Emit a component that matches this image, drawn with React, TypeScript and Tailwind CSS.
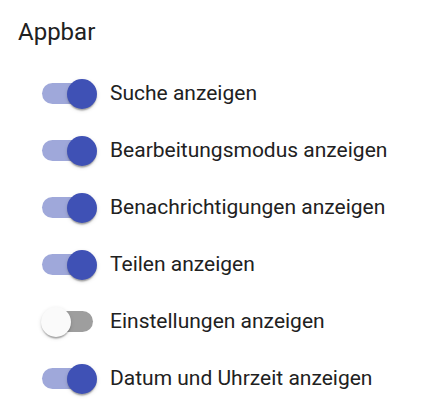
import React, { useState } from 'react';

const items = [
  { label: 'Suche anzeigen', on: true },
  { label: 'Bearbeitungsmodus anzeigen', on: true },
  { label: 'Benachrichtigungen anzeigen', on: true },
  { label: 'Teilen anzeigen', on: true },
  { label: 'Einstellungen anzeigen', on: false },
  { label: 'Datum und Uhrzeit anzeigen', on: true },
];

const Switch = ({ checked, onChange }: { checked: boolean; onChange: () => void }) => (
  <button
    onClick={onChange}
    className="relative w-[87px] h-[57px] p-[18px] flex-shrink-0 flex items-center"
  >
    <span
      className={`block w-[51px] h-[21px] rounded-[10.5px] ${checked ? 'bg-[#9fa8da]' : 'bg-[#9e9e9e]'}`}
    />
    <span
      className={`absolute top-[13.5px] w-[30px] h-[30px] rounded-full shadow-[0_3px_1.5px_-1.5px_rgba(0,0,0,0.2),0_1.5px_1.5px_0_rgba(0,0,0,0.14),0_1.5px_4.5px_0_rgba(0,0,0,0.12)] ${
        checked ? 'left-[43px] bg-[#3f51b5]' : 'left-[17px] bg-[#fafafa]'
      }`}
    />
  </button>
);

export default function App() {
  const [state, setState] = useState(items.map((i) => i.on));

  return (
    <div className="w-[431px] h-[400px] bg-white overflow-hidden font-['Roboto',sans-serif] text-[#212121]">
      <h2 className="pl-[18px] pt-[17px] text-[24px] leading-[30px] font-normal">Appbar</h2>
      <div className="pl-[24px] pt-[18px] flex flex-col">
        {items.map((item, i) => (
          <label key={item.label} className="flex items-center h-[57px] cursor-pointer">
            <Switch
              checked={state[i]}
              onChange={() => setState((s) => s.map((v, j) => (j === i ? !v : v)))}
            />
            <span className="-ml-[1px] text-[21px] leading-none">{item.label}</span>
          </label>
        ))}
      </div>
    </div>
  );
}
